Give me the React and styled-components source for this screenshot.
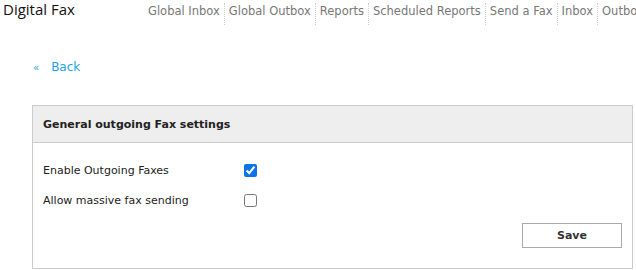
import React from "react";
import styled, { createGlobalStyle } from "styled-components";

const Global = createGlobalStyle`
  html, body { margin: 0; padding: 0; background: #fff; }
  body { font-family: "DejaVu Sans", Verdana, sans-serif; font-size: 11px; color: #222; }
`;

const Page = styled.div`
  width: 636px;
  height: 270px;
  overflow: hidden;
`;

const TopBar = styled.div`
  display: flex;
  align-items: flex-start;
  height: 24px;
`;

const Brand = styled.div`
  flex-shrink: 0;
  font-family: "Open Sans", sans-serif;
  font-size: 15px;
  color: #111;
  padding: 0 0 0 3px;
  width: 140px;
  line-height: 18px;
`;

const Nav = styled.nav`
  display: flex;
  flex-shrink: 0;
  white-space: nowrap;
  padding-top: 3px;
`;

const NavItem = styled.a`
  color: #777;
  text-decoration: none;
  font-size: 11.5px;
  padding: 0 4px;
  line-height: 16px;
  height: 22px;
  border-left: ${(p) => (p.$first ? "none" : "1px dotted #ccc")};
  &:first-child { padding-left: 5px; }
`;

const Content = styled.div`
  padding: 36px 3px 0 32px;
`;

const BackLink = styled.a`
  display: flex;
  align-items: center;
  gap: 12px;
  color: #1aa6dc;
  font-size: 12px;
  text-decoration: none;
  padding-left: 1px;
  margin-bottom: 31px;
`;

const Panel = styled.section`
  border: 1px solid #ccc;
`;

const PanelHeader = styled.div`
  background: #eee;
  border-bottom: 1px solid #ccc;
  height: 36px;
  display: flex;
  align-items: center;
  padding-left: 10px;
  font-weight: bold;
  color: #222;
`;

const PanelBody = styled.div`
  padding: 12px 10px 20px 10px;
`;

const Row = styled.label`
  display: grid;
  grid-template-columns: 201px auto;
  align-items: center;
  height: 30px;
`;

const Check = styled.input`
  margin: 0;
  width: 13px;
  height: 13px;
  accent-color: #0b75e8;
`;

const Actions = styled.div`
  display: flex;
  justify-content: flex-end;
  margin-top: 8px;
`;

const Button = styled.button`
  width: 100px;
  height: 25px;
  background: #fff;
  border: 1px solid #aaa;
  font-family: inherit;
  font-size: 11px;
  font-weight: bold;
  color: #333;
`;

const navLinks = [
  "Global Inbox",
  "Global Outbox",
  "Reports",
  "Scheduled Reports",
  "Send a Fax",
  "Inbox",
  "Outbox",
];

export default function App() {
  return (
    <Page>
      <Global />
      <TopBar>
        <Brand>Digital Fax</Brand>
        <Nav>
          {navLinks.map((l, i) => (
            <NavItem key={l} $first={i === 0} href="#">
              {l}
            </NavItem>
          ))}
        </Nav>
      </TopBar>
      <Content>
        <BackLink href="#">
          <span style={{ fontSize: 10 }}>«</span>
          <span>Back</span>
        </BackLink>
        <Panel>
          <PanelHeader>General outgoing Fax settings</PanelHeader>
          <PanelBody>
            <Row>
              <span>Enable Outgoing Faxes</span>
              <Check type="checkbox" defaultChecked />
            </Row>
            <Row>
              <span>Allow massive fax sending</span>
              <Check type="checkbox" />
            </Row>
            <Actions>
              <Button>Save</Button>
            </Actions>
          </PanelBody>
        </Panel>
      </Content>
    </Page>
  );
}
